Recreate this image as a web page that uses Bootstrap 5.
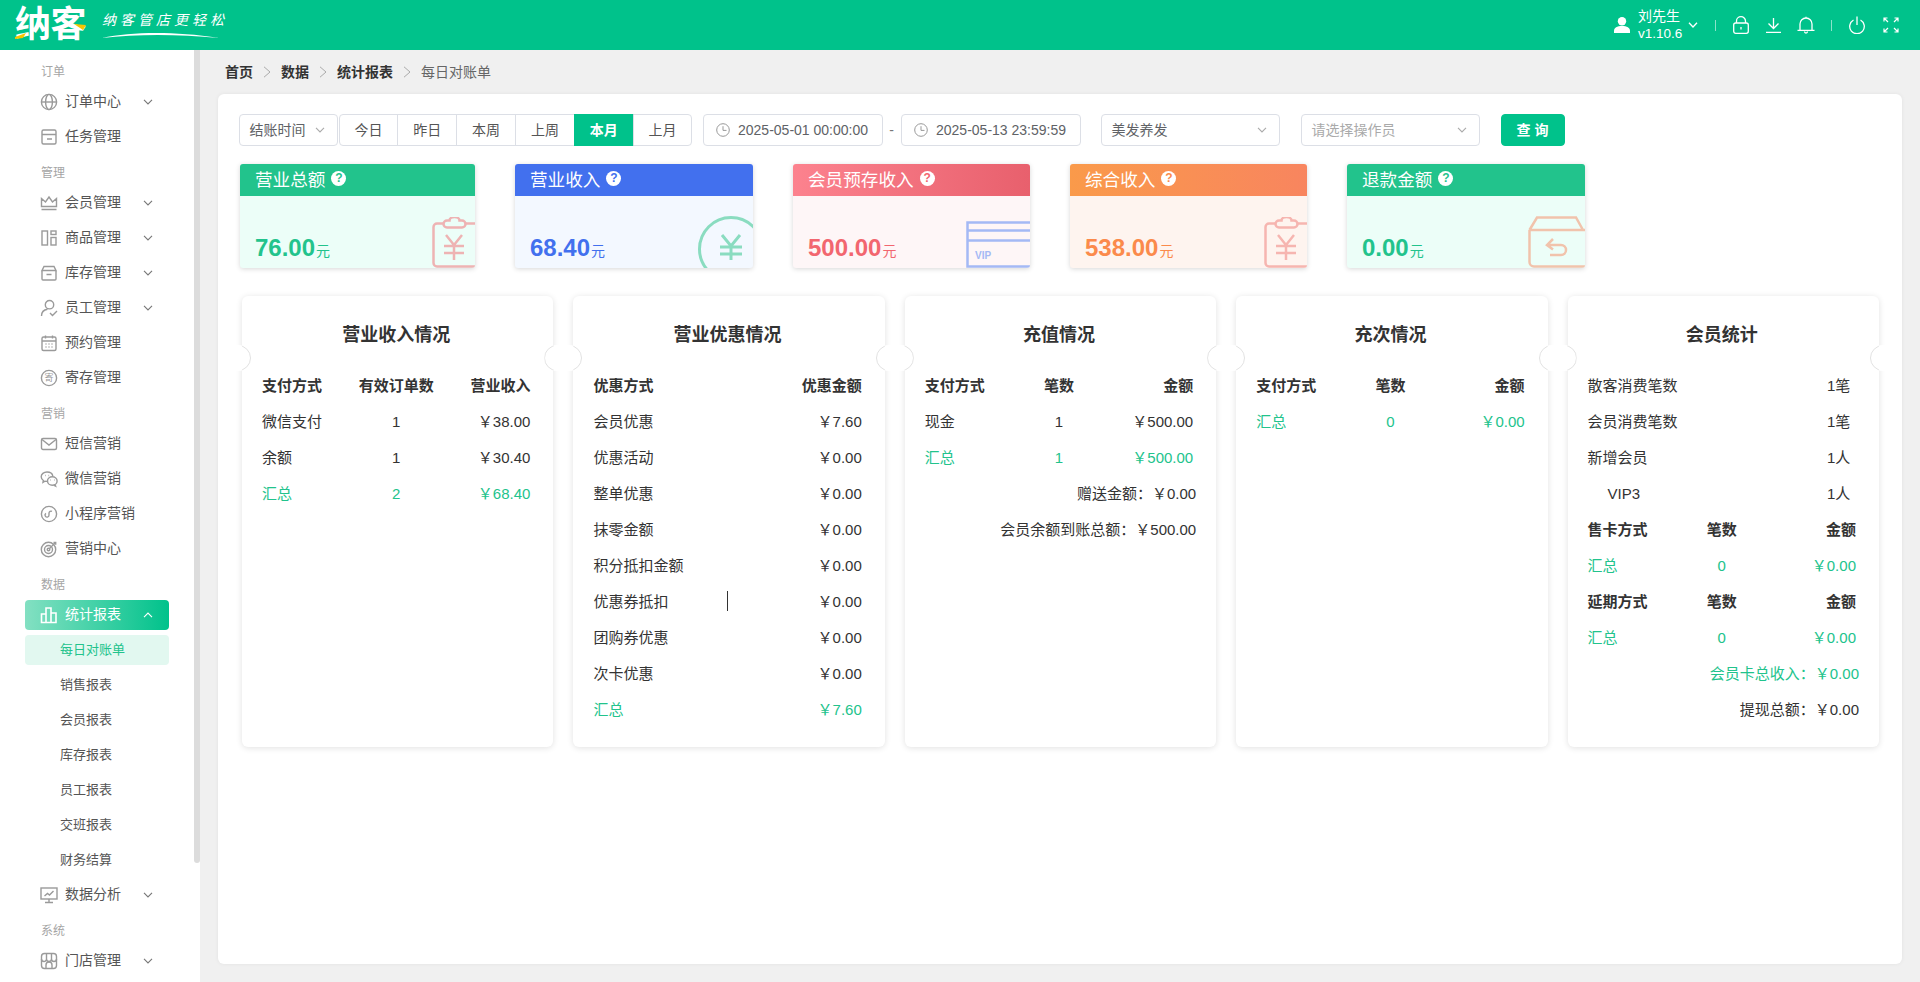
<!DOCTYPE html>
<html lang="zh-CN">
<head>
<meta charset="utf-8">
<title>每日对账单</title>
<link href="https://cdn.jsdelivr.net/npm/bootstrap@5.3.0/dist/css/bootstrap.min.css" rel="stylesheet">
<style>
html,body{height:100%;overflow:hidden}
body{font-family:"Liberation Sans","Noto Sans CJK SC",sans-serif;background:#f0f0f0;color:#333;font-size:14px}
.top-bar{height:50px;background:#00c28b;color:#fff;padding:0 21px 0 15px;flex-wrap:nowrap}
.logo-wrap{position:relative;width:85px;height:50px}
.logo-text{font-size:36px;font-weight:700;line-height:50px;color:#fff;white-space:nowrap;letter-spacing:-.5px}
.logo-accent{position:absolute;left:0;top:0;width:85px;height:50px}
.slogan-wrap{width:125px;padding-top:11px;height:50px;margin-left:2px}
.slogan{font-size:14px;letter-spacing:4px;line-height:18px;font-style:italic;white-space:nowrap;color:#fff}
.swoosh{display:block;width:117px;height:7px;margin-top:3px}
.hd-ic{fill:none;stroke:#fff;stroke-width:1.3;display:block}
.hd-fs{stroke-width:1.2;margin-left:18px}
.l16{margin-left:16px}.l17{margin-left:17px}.l18{margin-left:18px}.l1{margin-left:1px}
.l20{margin-left:20px}.l21{margin-left:21px}.l10{margin-left:10px}
.user-name{line-height:17.5px;font-size:14px;width:42px;white-space:nowrap;color:#fff;text-align:center}
.ver{font-size:13.5px}
.hd-sep{width:1px;height:11px;background:rgba(255,255,255,.55)}
.shell{height:calc(100vh - 50px)}
.side{width:200px;background:#fff;flex:none;position:relative;overflow:hidden;padding-top:3px}
.side-thumb{position:absolute;right:0;top:0;width:6px;height:813px;background:#dcdcdc;border-radius:0 0 3px 3px}
.side-label{height:31px;padding:8px 0 0 41px;font-size:12px;line-height:23px;color:#a5a5a5}
.side-row{height:35px;margin:0 31px 0 25px;padding:0 16px 0 15px;display:flex;align-items:center;color:#555;font-size:14px;text-decoration:none;white-space:nowrap}
.side-row .ic{margin-right:7px;flex:none}
.ic{width:18px;height:18px;fill:none;stroke:#9a9a9a;stroke-width:1.4}
.chev{width:10px;height:6px;fill:none;stroke:#777;stroke-width:1.1;margin-left:auto;flex:none}
.side-active{height:30px;margin:2.5px 31px 2.5px 25px;background:linear-gradient(90deg,#83e0c2,#00c28b);color:#fff;border-radius:4px}
.side-active .ic{stroke:#fff;stroke-width:1.6}
.side-active .chev{stroke:#fff}
.side-sub{height:35px;margin:0 31px 0 25px;padding-left:35px;display:flex;align-items:center;color:#555;font-size:13px;text-decoration:none}
.side-sub-wrap{height:35px;margin:0 31px 0 25px;padding:2.5px 0}
.side-sub-on{height:30px;padding-left:35px;display:flex;align-items:center;background:#e2f8f0;color:#22c38c;font-size:13px;border-radius:4px}
.content{min-width:0;padding:0 18px 18px}
.crumbs{height:44px;padding-left:7px;margin:0;align-items:center;flex-wrap:nowrap}
.crumbs b{font-weight:700;color:#333;font-size:14px}
.crumbs .plain{color:#666;font-size:14px}
.crumb-arrow{width:8px;height:12px;margin:0 10px;fill:none;stroke:#aaa;stroke-width:1;display:block}
.main-panel{width:1684px;height:870px;background:#fff;border-radius:6px;box-shadow:0 0 4px rgba(0,0,0,.06);padding:20px 0 0 20.5px}
.ctl{height:32px;border:1px solid #dcdfe6;border-radius:4px;display:flex;align-items:center;background:#fff;color:#606266;font-size:14px;white-space:nowrap}
.ctl .chev{stroke:#aaa}
.ctl-a{width:99px;padding:0 12px 0 10px}
.ctl-b{width:179px;padding:0 12px 0 10px}
.ctl-date{width:180px;padding-left:12px}
.ctl-date svg{width:14px;height:14px;margin-right:8.5px;fill:none;stroke:#999;stroke-width:1}
.ph{color:#aaa}
.seg{width:354px;height:32px;margin-left:1px}
.seg .btn{--bs-btn-padding-x:0;--bs-btn-padding-y:0;--bs-btn-font-size:14px;--bs-btn-color:#555;--bs-btn-border-color:#dcdfe6;--bs-btn-bg:#fff;--bs-btn-hover-bg:#fff;--bs-btn-hover-color:#555;--bs-btn-hover-border-color:#dcdfe6;--bs-btn-border-radius:4px;line-height:30px;width:60px}
.seg .btn.seg-on{background:#00c28b;border-color:#00c28b;color:#fff;font-weight:700}
.dash{width:18px;text-align:center;color:#777}
.go-btn{--bs-btn-padding-x:0;--bs-btn-padding-y:0;--bs-btn-bg:#00c28b;--bs-btn-border-color:#00c28b;--bs-btn-color:#fff;--bs-btn-hover-bg:#00c28b;--bs-btn-hover-color:#fff;--bs-btn-font-size:14px;--bs-btn-font-weight:700;--bs-btn-border-radius:4px;width:64px;height:32px;line-height:30px}
.stats{margin:18px 0 0 1.5px;gap:40px}
.stat{width:237px;height:104px;border-radius:3px;overflow:hidden;position:relative;box-shadow:0 1px 5px rgba(0,0,0,.16);flex:none}
.stat-w1{width:235px}.stat-w2{width:238px}
.stat-head{height:32px;padding-left:15px;color:#fff;font-size:17.6px;line-height:32px;display:flex;align-items:center}
.q-dot{width:15px;height:15px;border-radius:50%;background:#fff;font-size:12px;font-weight:700;line-height:15px;text-align:center;margin:-4px 0 0 6px;flex:none}
.stat-body{height:72px;padding:37px 0 0 15px;line-height:30px;white-space:nowrap}
.stat-num{font-size:24px;font-weight:700}
.stat-unit{font-size:14px;margin-left:1px}
.stat-art{position:absolute;right:0;bottom:0;fill:none;stroke-width:2.5;display:block}
.stat-art text{stroke:none;font-size:10px;font-weight:700;font-family:"Liberation Sans",sans-serif}
.t-green{--tone:#22c38c}.t-blue{--tone:#4270ee}.t-red{--tone:#f2666f}.t-orange{--tone:#fb8a4b}
.stat-num,.stat-unit{color:var(--tone)}
.q-dot{color:var(--tone)}
.bg-g{background:#ecfef8}.bg-b{background:#f3f8ff}.bg-r{background:#fef6f7}.bg-o{background:#fef4ef}
.hd-g{background:#22c38c}.hd-b{background:#4270ee}
.hd-r{background:linear-gradient(90deg,#fc828e,#e8606d)}
.hd-o{background:linear-gradient(90deg,#fa9a4a,#f8855f)}
.panels{display:grid;grid-template-columns:repeat(5,1fr);gap:20px;width:1637px;margin:28px 0 0 3.5px}
.info{height:451px;border:0;border-radius:6px;box-shadow:0 1px 6px rgba(0,0,0,.12);padding:25px 23px 0 20px;position:relative;color:#333;font-size:15px}
.info-title{font-size:18px;font-weight:700;line-height:28px;text-align:center;margin:0 0 19px;color:#333}
.notch{position:absolute;top:49px;width:26px;height:26px;border-radius:50%;background:#fff}
.notch::after{content:"";position:absolute;inset:0;border-radius:50%;border:1px solid #e2e2e2}
.notch-l{left:-17px}.notch-l::after{clip-path:inset(0 0 0 65%)}
.notch-r{right:-17px}.notch-r::after{clip-path:inset(0 65% 0 0)}
.tr3{display:grid;grid-template-columns:1fr auto 1fr;height:36px;align-items:center;white-space:nowrap}
.tr3>:nth-child(2){text-align:center}
.tr3>:last-child{text-align:right}
.tr2{display:flex;justify-content:space-between;align-items:center;height:36px;white-space:nowrap}
.tr-end{height:36px;line-height:36px;text-align:right;margin-right:-3px;white-space:nowrap}
.th{font-weight:700}
.sum{color:#22c38c}
.qty{width:29px;text-align:left}
.indent{padding-left:20px}
.caret-mark{position:absolute;left:154px;top:295px;width:1px;height:20px;background:#333}
</style>
</head>
<body>
<svg class="d-none" xmlns="http://www.w3.org/2000/svg">
<symbol id="sy-chev" viewBox="0 0 10 6"><path d="M1 .8 5 5 9 .8"/></symbol>
<symbol id="sy-up" viewBox="0 0 10 6"><path d="M1 5.200 5 1 9 5.200"/></symbol>
<symbol id="sy-clock" viewBox="0 0 14 14"><circle cx="7" cy="7" r="6.300"/><path d="M7 3.200V7.400H10.500"/></symbol>
<symbol id="sy-arrow" viewBox="0 0 8 12"><path d="M1 .8 7 6 1 11.200"/></symbol>
<symbol id="sy-clip" viewBox="0 0 43 51"><path d="M11 6.500H5A3.500 3.500 0 0 0 1.500 10V46A3.500 3.500 0 0 0 5 49.500H50M33 6.500H50"/><path d="M15 10.500a3.500 3.500 0 0 1 0-7h2.500a5 3.500 0 0 1 10 0h2.500a3.500 3.500 0 0 1 0 7z"/><path d="M14 18 22 28 30 18M22 28V43M12 29H32M12 36H32"/></symbol>
</svg>

<nav class="navbar top-bar d-flex align-items-center justify-content-between">
  <div class="d-flex align-items-center">
    <a class="logo-wrap d-block text-decoration-none">
      <span class="logo-text">纳客</span>
      <svg class="logo-accent" viewBox="0 0 85 50"><path d="M0 37 11 33 8 38 0 39Z" fill="#f7c600"/><path d="M59 24 71 25 68 30Z" fill="#f7c600"/></svg>
    </a>
    <div class="slogan-wrap">
      <div class="slogan">纳客管店更轻松</div>
      <svg class="swoosh" viewBox="0 0 117 7"><path d="M0 6C30 0 70-1 117 6 75 2 35 2 0 6Z" fill="#fff"/></svg>
    </div>
  </div>
  <div class="d-flex align-items-center">
    <svg width="16" height="16" viewBox="0 0 16 16" fill="#fff" class="d-block me-2"><circle cx="8" cy="4.300" r="4.200"/><path d="M0 14c0-3.500 3-5 8-5s8 1.500 8 5v2H0Z"/></svg>
    <div class="user-name"><div>刘先生</div><div class="ver">v1.10.6</div></div>
    <svg width="10" height="6" class="d-block hd-ic ms-2"><use href="#sy-chev"/></svg>
    <span class="hd-sep l17"></span>
    <svg width="16" height="18" viewBox="0 0 16 18" class="hd-ic l17"><rect x=".7" y="7" width="14.600" height="10.300" rx="2"/><path d="M3.500 7V5a4.500 4.300 0 0 1 9 0V7M8 11v2.500"/></svg>
    <svg width="15" height="16" viewBox="0 0 15 16" class="hd-ic l17"><path d="M7.500 1v10M2.500 6.500l5 5 5-5M0 15.300h15"/></svg>
    <svg width="18" height="18" viewBox="0 0 18 18" class="hd-ic l16"><path d="M3 14V8a6 6 0 0 1 12 0v6M.5 14.400h17M9 2V.8M7.500 15.500a1.500 1.500 0 0 0 3 0"/></svg>
    <span class="hd-sep l16"></span>
    <svg width="16" height="18" viewBox="0 0 16 18" class="hd-ic l17"><path d="M4.500 4a7.300 7.300 0 1 0 7 0M8 .5V9"/></svg>
    <svg width="16" height="16" viewBox="0 0 16 16" class="hd-ic hd-fs"><path d="M1 4.500V1h3.500M1 1l4 4M11.500 1H15v3.500M15 1l-4 4M1 11.500V15h3.500M1 15l4-4M11.500 15H15v-3.500M15 15l-4-4"/></svg>
  </div>
</nav>

<div class="d-flex shell">
  <aside class="side">
    <div class="side-thumb"></div>
    <div class="side-label">订单</div>
    <a class="side-row"><svg class="ic" viewBox="0 0 18 18"><circle cx="9" cy="9" r="7.600"/><ellipse cx="9" cy="9" rx="3.400" ry="7.600"/><path d="M1.400 9h15.200"/></svg>订单中心<svg class="chev"><use href="#sy-chev"/></svg></a>
    <a class="side-row"><svg class="ic" viewBox="0 0 18 18"><rect x="2" y="2" width="14" height="14" rx="1.500"/><path d="M2 6.500h14M7 11h5"/></svg>任务管理</a>
    <div class="side-label">管理</div>
    <a class="side-row"><svg class="ic" viewBox="0 0 18 18"><path d="M1.500 4.500 5.500 8 9 3l3.500 5 4-3.500V12.500H1.500ZM1.500 15.500h15"/></svg>会员管理<svg class="chev"><use href="#sy-chev"/></svg></a>
    <a class="side-row"><svg class="ic" viewBox="0 0 18 18"><rect x="2" y="2" width="5.500" height="14"/><rect x="11" y="2" width="5" height="3.500"/><rect x="11" y="8.500" width="5" height="7.500"/></svg>商品管理<svg class="chev"><use href="#sy-chev"/></svg></a>
    <a class="side-row"><svg class="ic" viewBox="0 0 18 18"><path d="M4 2.500H14L16 6.500H2ZM2 6.500V15a1 1 0 0 0 1 1H15a1 1 0 0 0 1-1V6.500M6.500 10.500h5"/></svg>库存管理<svg class="chev"><use href="#sy-chev"/></svg></a>
    <a class="side-row"><svg class="ic" viewBox="0 0 18 18"><circle cx="9.500" cy="5.700" r="4.200"/><path d="M1.500 17c0-4 2.500-6.200 6-6.700M10 14l2.500 2.500L17 12"/></svg>员工管理<svg class="chev"><use href="#sy-chev"/></svg></a>
    <a class="side-row"><svg class="ic" viewBox="0 0 18 18"><rect x="2" y="3" width="14" height="13.500" rx="1.500"/><path d="M2 7h14M5.500 1.500v3M12.500 1.500v3M5.500 10h1M8.500 10h1M11.500 10h1M5.500 13h1M8.500 13h1M11.500 13h1"/></svg>预约管理</a>
    <a class="side-row"><svg class="ic" viewBox="0 0 18 18"><circle cx="9" cy="9" r="7.600"/><text x="9" y="12.200" font-size="9" text-anchor="middle" fill="#9a9a9a" stroke="none">寄</text></svg>寄存管理</a>
    <div class="side-label">营销</div>
    <a class="side-row"><svg class="ic" viewBox="0 0 18 18"><rect x="1.500" y="3.500" width="15" height="11" rx="1.500"/><path d="M2 4.500 9 10l7-5.500"/></svg>短信营销</a>
    <a class="side-row"><svg class="ic" viewBox="0 0 18 18"><path d="M7.500 11.300c-.9.200-1.700.1-2.500-.1l-2 1.100.4-1.800C2 9.600 1.200 8.300 1.200 6.800 1.200 4 3.800 2 7 2c3 0 5.400 1.500 5.800 4"/><ellipse cx="12.300" cy="11" rx="4.800" ry="4.200"/><path d="M15 14.500l.6 1.700-2-1M5 5.500h.6M8.500 5.500h.6M10.500 10h.5M14 10h.5"/></svg>微信营销</a>
    <a class="side-row"><svg class="ic" viewBox="0 0 18 18"><circle cx="9" cy="9" r="7.600"/><path d="M12 6.400a2 2 0 0 0-3 1.600v2a2 2 0 1 1-3-1.600"/></svg>小程序营销</a>
    <a class="side-row"><svg class="ic" viewBox="0 0 18 18"><circle cx="8.500" cy="9.500" r="7.200"/><circle cx="8.500" cy="9.500" r="4"/><circle cx="8.500" cy="9.500" r="1.300"/><path d="M9 9 15.500 2.500M13.500 2.500h2.200V4.700"/></svg>营销中心</a>
    <div class="side-label">数据</div>
    <a class="side-row side-active"><svg class="ic" viewBox="0 0 18 18"><path d="M1.500 16.500V8h4.500v8.500ZM6 16.500V2h5v14.500ZM11 16.500V7h5v9.500Z"/></svg>统计报表<svg class="chev"><use href="#sy-up"/></svg></a>
    <div class="side-sub-wrap"><div class="side-sub-on">每日对账单</div></div>
    <a class="side-sub">销售报表</a>
    <a class="side-sub">会员报表</a>
    <a class="side-sub">库存报表</a>
    <a class="side-sub">员工报表</a>
    <a class="side-sub">交班报表</a>
    <a class="side-sub">财务结算</a>
    <a class="side-row"><svg class="ic" viewBox="0 0 18 18"><rect x="1" y="2" width="16" height="11"/><path d="M9 13v3M5 16.500h8M4.500 10 7.500 7.500 9.500 9l4-4"/></svg>数据分析<svg class="chev"><use href="#sy-chev"/></svg></a>
    <div class="side-label">系统</div>
    <a class="side-row"><svg class="ic" viewBox="0 0 18 18"><rect x="1.500" y="1.500" width="15" height="15" rx="3"/><path d="M1.500 7a2.500 2.500 0 0 0 5 0 2.500 2.500 0 0 0 5 0 2.500 2.500 0 0 0 5 0M6.500 1.500V7M11.500 1.500V7M6 16.500V13a3 3 0 0 1 6 0v3.500"/></svg>门店管理<svg class="chev"><use href="#sy-chev"/></svg></a>
  </aside>

  <main class="content flex-grow-1">
    <ol class="breadcrumb crumbs d-flex list-unstyled">
      <li><b>首页</b></li>
      <li><svg class="crumb-arrow"><use href="#sy-arrow"/></svg></li>
      <li><b>数据</b></li>
      <li><svg class="crumb-arrow"><use href="#sy-arrow"/></svg></li>
      <li><b>统计报表</b></li>
      <li><svg class="crumb-arrow"><use href="#sy-arrow"/></svg></li>
      <li class="plain">每日对账单</li>
    </ol>
    <section class="main-panel">
      <div class="d-flex align-items-center">
        <div class="ctl ctl-a">结账时间<svg class="chev"><use href="#sy-chev"/></svg></div>
        <div class="btn-group seg" role="group">
          <button class="btn" type="button">今日</button>
          <button class="btn" type="button">昨日</button>
          <button class="btn" type="button">本周</button>
          <button class="btn" type="button">上周</button>
          <button class="btn seg-on" type="button">本月</button>
          <button class="btn" type="button">上月</button>
        </div>
        <div class="ctl ctl-date l10"><svg><use href="#sy-clock"/></svg>2025-05-01 00:00:00</div>
        <span class="dash">-</span>
        <div class="ctl ctl-date"><svg><use href="#sy-clock"/></svg>2025-05-13 23:59:59</div>
        <div class="ctl ctl-b l20">美发养发<svg class="chev"><use href="#sy-chev"/></svg></div>
        <div class="ctl ctl-b ph l21">请选择操作员<svg class="chev"><use href="#sy-chev"/></svg></div>
        <button class="btn go-btn l21" type="button">查 询</button>
      </div>

      <div class="d-flex stats">
        <div class="stat stat-w1 bg-g t-green">
          <div class="stat-head hd-g">营业总额<span class="q-dot">?</span></div>
          <div class="stat-body"><span class="stat-num">76.00</span><span class="stat-unit">元</span></div>
          <svg class="stat-art" width="43" height="51" stroke="#eeb3b3"><use href="#sy-clip"/></svg>
        </div>
        <div class="stat stat-w2 bg-b t-blue">
          <div class="stat-head hd-b">营业收入<span class="q-dot">?</span></div>
          <div class="stat-body"><span class="stat-num">68.40</span><span class="stat-unit">元</span></div>
          <svg class="stat-art" width="55" height="52" viewBox="0 0 55 52" stroke="#8adcc0"><circle cx="33" cy="33" r="31.500" stroke-width="3"/><path d="M24 19 33 30 42 19M33 30V44M22 31H44M22 38H44" stroke-width="3"/></svg>
        </div>
        <div class="stat bg-r t-red">
          <div class="stat-head hd-r">会员预存收入<span class="q-dot">?</span></div>
          <div class="stat-body"><span class="stat-num">500.00</span><span class="stat-unit">元</span></div>
          <svg class="stat-art" width="64" height="47" viewBox="0 0 64 47" stroke="#a4b9f5"><path d="M65 1.500H1.500V45.500H65M1.500 9.500H65M1.500 19.500H65"/><text x="9" y="38" fill="#a4b9f5">VIP</text></svg>
        </div>
        <div class="stat bg-o t-orange">
          <div class="stat-head hd-o">综合收入<span class="q-dot">?</span></div>
          <div class="stat-body"><span class="stat-num">538.00</span><span class="stat-unit">元</span></div>
          <svg class="stat-art" width="43" height="51" stroke="#f6b5b0"><use href="#sy-clip"/></svg>
        </div>
        <div class="stat stat-w2 bg-g t-green">
          <div class="stat-head hd-g">退款金额<span class="q-dot">?</span></div>
          <div class="stat-body"><span class="stat-num">0.00</span><span class="stat-unit">元</span></div>
          <svg class="stat-art" width="57" height="52" viewBox="0 0 57 52" stroke="#f1c3ac"><path d="M1.500 14 9 1.500H48L55 14M1.500 14H60M1.500 14V46a4.500 4.500 0 0 0 4.500 4.500H60M25 23l-6 6 6 4.500M19 29H33a5 5 0 0 1 0 10H22"/></svg>
        </div>
      </div>

      <div class="panels">
        <div class="card info">
          <span class="notch notch-l"></span><span class="notch notch-r"></span>
          <h2 class="info-title">营业收入情况</h2>
          <div class="tr3 th"><span>支付方式</span><span>有效订单数</span><span>营业收入</span></div>
          <div class="tr3"><span>微信支付</span><span>1</span><span>￥38.00</span></div>
          <div class="tr3"><span>余额</span><span>1</span><span>￥30.40</span></div>
          <div class="tr3 sum"><span>汇总</span><span>2</span><span>￥68.40</span></div>
        </div>
        <div class="card info">
          <span class="notch notch-l"></span><span class="notch notch-r"></span>
          <h2 class="info-title">营业优惠情况</h2>
          <div class="tr2 th"><span>优惠方式</span><span>优惠金额</span></div>
          <div class="tr2"><span>会员优惠</span><span>￥7.60</span></div>
          <div class="tr2"><span>优惠活动</span><span>￥0.00</span></div>
          <div class="tr2"><span>整单优惠</span><span>￥0.00</span></div>
          <div class="tr2"><span>抹零金额</span><span>￥0.00</span></div>
          <div class="tr2"><span>积分抵扣金额</span><span>￥0.00</span></div>
          <div class="tr2"><span>优惠券抵扣</span><span>￥0.00</span></div>
          <div class="tr2"><span>团购券优惠</span><span>￥0.00</span></div>
          <div class="tr2"><span>次卡优惠</span><span>￥0.00</span></div>
          <div class="tr2 sum"><span>汇总</span><span>￥7.60</span></div>
          <span class="caret-mark"></span>
        </div>
        <div class="card info">
          <span class="notch notch-l"></span><span class="notch notch-r"></span>
          <h2 class="info-title">充值情况</h2>
          <div class="tr3 th"><span>支付方式</span><span>笔数</span><span>金额</span></div>
          <div class="tr3"><span>现金</span><span>1</span><span>￥500.00</span></div>
          <div class="tr3 sum"><span>汇总</span><span>1</span><span>￥500.00</span></div>
          <div class="tr-end">赠送金额：￥0.00</div>
          <div class="tr-end">会员余额到账总额：￥500.00</div>
        </div>
        <div class="card info">
          <span class="notch notch-l"></span><span class="notch notch-r"></span>
          <h2 class="info-title">充次情况</h2>
          <div class="tr3 th"><span>支付方式</span><span>笔数</span><span>金额</span></div>
          <div class="tr3 sum"><span>汇总</span><span>0</span><span>￥0.00</span></div>
        </div>
        <div class="card info">
          <span class="notch notch-l"></span><span class="notch notch-r"></span>
          <h2 class="info-title">会员统计</h2>
          <div class="tr2"><span>散客消费笔数</span><span class="qty">1笔</span></div>
          <div class="tr2"><span>会员消费笔数</span><span class="qty">1笔</span></div>
          <div class="tr2"><span>新增会员</span><span class="qty">1人</span></div>
          <div class="tr2"><span class="indent">VIP3</span><span class="qty">1人</span></div>
          <div class="tr3 th"><span>售卡方式</span><span>笔数</span><span>金额</span></div>
          <div class="tr3 sum"><span>汇总</span><span>0</span><span>￥0.00</span></div>
          <div class="tr3 th"><span>延期方式</span><span>笔数</span><span>金额</span></div>
          <div class="tr3 sum"><span>汇总</span><span>0</span><span>￥0.00</span></div>
          <div class="tr-end sum">会员卡总收入：￥0.00</div>
          <div class="tr-end">提现总额：￥0.00</div>
        </div>
      </div>
    </section>
  </main>
</div>
<script src="https://cdn.jsdelivr.net/npm/bootstrap@5.3.0/dist/js/bootstrap.bundle.min.js"></script>
</body>
</html>
